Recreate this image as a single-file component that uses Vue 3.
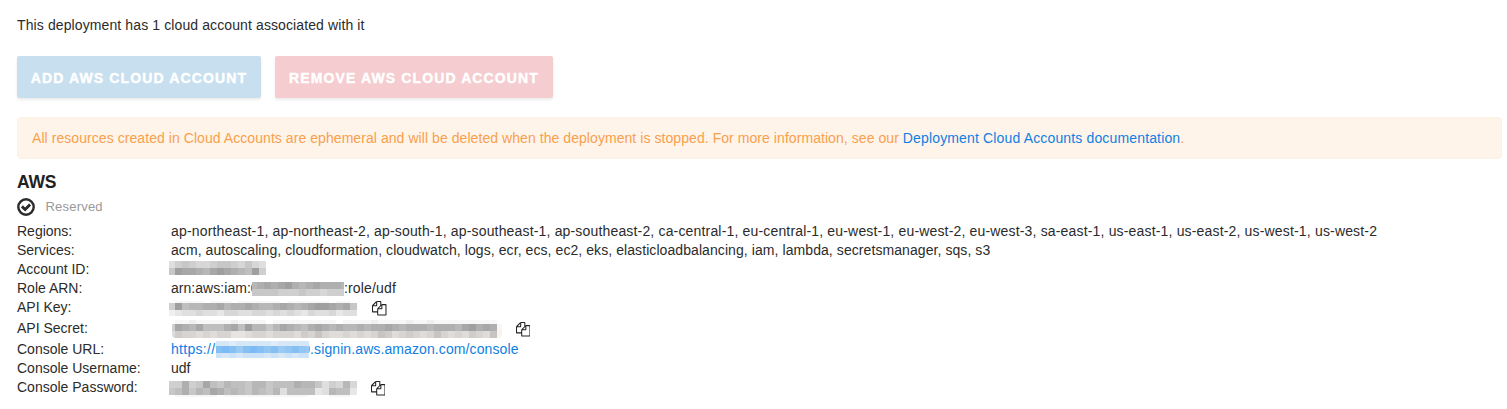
<script setup>
import { h } from 'vue'

const notice = 'All resources created in Cloud Accounts are ephemeral and will be deleted when the deployment is stopped. For more information, see our '

// Each mosaic row: [top, height, shades, tint]; one hex digit per 7px cell, dark to light.
const masks = {
  account: { w: 97, h: 15, first: 6, rows: [[0, 7, 'b989aa9889a8ab'], [7, 7, '83445643456739']] },
  role: { w: 92, h: 14, first: 5, rows: [[0, 7, '65454356545556'], [7, 7, '8888999899a999']] },
  key: { w: 188, h: 15, first: 6, rows: [[0, 2, 'feeeefeeefeeeeeefeeeeeefeef'], [2, 7, '937665546554566545654334548'], [9, 6, 'dcbbabbcaabbaabababcabbacbb']] },
  secret: { w: 330, h: 18, first: 3, rows: [[0, 4, 'feedeeeeedeeeefeeeeeeeeefeeeedeeeedeedeeeeeeeeef'], [4, 7, '94564777547366864567545656656554565556555643545e'], [11, 7, 'b9aababaaccbaabaaab9a8abbababa89ba9aba8abab9ab8e', 'warm']] },
  url: { w: 93, h: 17, first: 6, rows: [[0, 5, 'ccdcccccdccccc', 'blue'], [5, 7, '43464345465456', 'blue'], [12, 5, 'bcbcbbbcbcbcbb', 'blue']] },
  password: { w: 188, h: 16, first: 6, rows: [[0, 7, '9959847867786687775668b9a6a'], [7, 7, '8758674576786786b7777cb677c'], [14, 2, 'feeeeeefeeeeeeeeeeeefffeeef']] }
}

function shade(c, tint) {
  const n = parseInt(c, 16)
  if (tint === 'blue') return `rgb(${94 + n * 10}, ${172 + n * 5}, ${241 + Math.round(n / 2)})`
  const v = 135 + n * 8
  return tint === 'warm' ? `rgb(${v}, ${v - 3}, ${v - 5})` : `rgb(${v}, ${v}, ${v})`
}

const Mosaic = (props) => {
  const m = masks[props.name]
  const cells = []
  m.rows.forEach(([y, height, codes, tint]) => {
    [...codes].forEach((c, i) => {
      const x = i === 0 ? 0 : m.first + (i - 1) * 7
      const width = Math.min(i === 0 ? m.first : 7, m.w - x)
      if (width > 0) cells.push(h('rect', { x, y, width, height, fill: shade(c, tint) }))
    })
  })
  return h('svg', { width: m.w, height: m.h, viewBox: `0 0 ${m.w} ${m.h}`, 'shape-rendering': 'crispEdges' }, cells)
}
Mosaic.props = ['name']

const CopyIcon = () => h('svg', { width: 14.5, height: 14.5, viewBox: '0 0 1792 1792' }, [
  h('path', { fill: '#222', d: 'M1696 384q40 0 68 28t28 68v1216q0 40-28 68t-68 28h-960q-40 0-68-28t-28-68v-288h-544q-40 0-68-28t-28-68v-672q0-40 20-88t48-76l408-408q28-28 76-48t88-20h416q40 0 68 28t28 68v328q68-40 128-40h416zm-544 213l-299 299h299v-299zm-640-384l-299 299h299v-299zm196 647l316-316v-416h-384v416q0 40-28 68t-68 28h-416v640h512v-256q0-40 20-88t48-76zm956 804v-1152h-384v416q0 40-28 68t-68 28h-416v640h896z' })
])
</script>

<template>
  <main class="page">
    <p class="summary">This deployment has 1 cloud account associated with it</p>
    <div class="actions">
      <button class="btn add">ADD AWS CLOUD ACCOUNT</button>
      <button class="btn remove">REMOVE AWS CLOUD ACCOUNT</button>
    </div>
    <div class="notice"><span class="message">{{ notice }}</span><a class="doc">Deployment Cloud Accounts documentation</a>.</div>
    <h2>AWS</h2>
    <div class="status">
      <svg width="18" height="18" viewBox="0 0 18 18">
        <circle cx="9" cy="9" r="7.7" fill="none" stroke="#2b2b2b" stroke-width="2.4" />
        <path d="M4.9 8.4l3.2 3.1 5-5" fill="none" stroke="#2b2b2b" stroke-width="2.9" />
      </svg>
      <span class="reserved">Reserved</span>
    </div>
    <dl>
      <div class="row"><dt>Regions:</dt><dd class="regions">ap-northeast-1, ap-northeast-2, ap-south-1, ap-southeast-1, ap-southeast-2, ca-central-1, eu-central-1, eu-west-1, eu-west-2, eu-west-3, sa-east-1, us-east-1, us-east-2, us-west-1, us-west-2</dd></div>
      <div class="row"><dt>Services:</dt><dd class="services">acm, autoscaling, cloudformation, cloudwatch, logs, ecr, ecs, ec2, eks, elasticloadbalancing, iam, lambda, secretsmanager, sqs, s3</dd></div>
      <div class="row"><dt>Account ID:</dt><dd><Mosaic name="account" class="mask-account" /></dd></div>
      <div class="row"><dt>Role ARN:</dt><dd><span class="arn">arn:aws:iam:0</span><Mosaic name="role" class="mask-role" /><span class="role-name">:role/udf</span></dd></div>
      <div class="row tall"><dt>API Key:</dt><dd><Mosaic name="key" class="mask-key" /><CopyIcon class="copy" /></dd></div>
      <div class="row tall"><dt>API Secret:</dt><dd><Mosaic name="secret" class="mask-secret" /><CopyIcon class="copy copy-secret" /></dd></div>
      <div class="row"><dt>Console URL:</dt><dd class="link"><span class="scheme">https://</span><Mosaic name="url" class="mask-url" /><span class="host">0.signin.aws.amazon.com/console</span></dd></div>
      <div class="row"><dt>Console Username:</dt><dd>udf</dd></div>
      <div class="row"><dt>Console Password:</dt><dd><Mosaic name="password" class="mask-password" /><CopyIcon class="copy copy-password" /></dd></div>
    </dl>
  </main>
</template>

<style>
body { background: #fff; }
</style>

<style scoped>
.page { box-sizing: border-box; height: 409px; padding: 16px 5px 0 17px; overflow: hidden; font: 14px/19px "Liberation Sans", Arial, sans-serif; color: #2b2b2b; white-space: nowrap; }
.summary { margin: 0; height: 40px; letter-spacing: .11px; }
.actions { display: flex; gap: 14px; height: 42px; }
.btn { box-sizing: border-box; border: 0; border-radius: 2px; padding: 2px 0 0; font: bold 14px/20px "Liberation Sans", Arial, sans-serif; letter-spacing: 1.13px; -webkit-text-stroke: .4px #fff; color: #fff; box-shadow: 0 2px 3px rgba(0, 0, 0, .08); white-space: nowrap; }
.add { width: 244px; background: #c7dfee; }
.remove { width: 278px; background: #f5cccf; }
.notice { box-sizing: border-box; height: 42px; margin-top: 19px; padding: 0 14px; border: 1px solid #fdf0e5; border-radius: 4px; background: #fff4ea; color: #f9a04c; line-height: 40px; }
.message { letter-spacing: .063px; }
.doc { letter-spacing: .15px; }
.doc, .link { color: #0f80e2; }
h2 { height: 24px; margin: 11px 0 0; font-size: 17.5px; line-height: 24px; font-weight: bold; letter-spacing: -.2px; color: #222; }
.status { display: flex; align-items: center; height: 25px; gap: 10.5px; }
.status svg { flex: none; }
.reserved { color: #999; font-size: 13px; letter-spacing: .2px; }
dl { margin: 3px 0 0; }
.row { display: grid; grid-template-columns: 154px 1fr; height: 19px; }
.tall { height: 21px; }
dt, dd { margin: 0; }
dd { display: flex; align-items: flex-start; }
dd svg { flex: none; z-index: 1; }
.regions { letter-spacing: .168px; }
.services { letter-spacing: .077px; }
.arn { width: 88px; margin-right: -7px; letter-spacing: .04px; }
.role-name { letter-spacing: .15px; }
.scheme { width: 45px; letter-spacing: .3px; }
.host { margin-left: -6.8px; letter-spacing: .1px; }
.mask-account { margin: 1px 0 0 -2px; }
.mask-role { margin-top: 3px; }
.mask-key { margin: 3px 0 0 -2px; }
.mask-secret { margin: 1px 0 0 1px; border-radius: 3px; }
.mask-url { margin-top: 1px; }
.mask-password { margin: 3px 0 0 -2px; }
.copy { margin: 3px 0 0 15px; }
.copy-secret { margin-left: 13.5px; }
.copy-password { margin-left: 13.5px; }
</style>
